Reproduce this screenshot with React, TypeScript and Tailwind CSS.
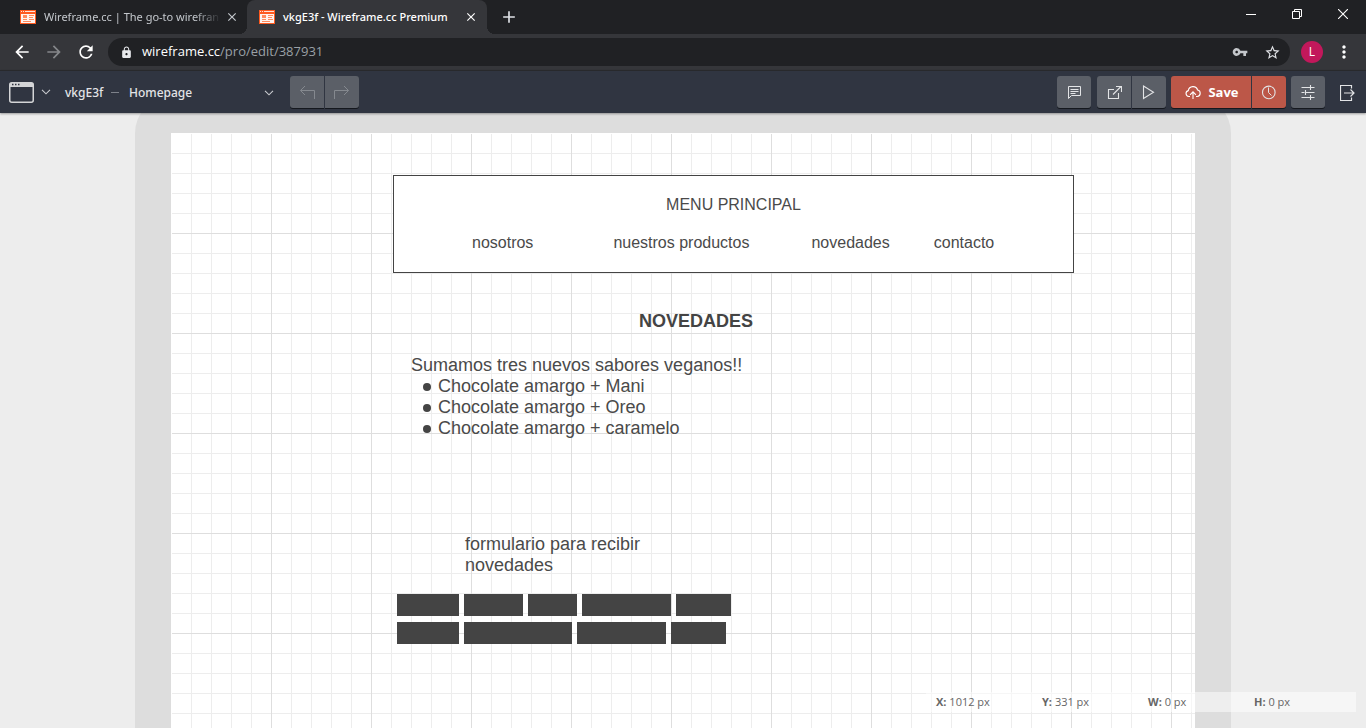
import React from "react";
import {
  MdAdd,
  MdArrowBack,
  MdArrowForward,
  MdClose,
  MdLock,
  MdMoreVert,
  MdRefresh,
  MdStarBorder,
  MdVpnKey,
} from "react-icons/md";

function Favicon() {
  return (
    <svg width="16" height="14" viewBox="0 0 16 14" className="shrink-0" shapeRendering="crispEdges">
      <rect width="16" height="14" fill="#ff5a1f" />
      <path d="M1 1H2V2H1ZM3 1H4V2H3ZM5 1H15V2H5Z" fill="#ffe3d8" />
      <rect x="1" y="4" width="14" height="9" fill="#fff3ee" />
      <path d="M3 5H7V8H3ZM9 5H14V6H9ZM9 7H13V8H9ZM3 9H7V10H3ZM9 9H14V10H9ZM3 11H11V12H3Z" fill="#ff8a5c" />
    </svg>
  );
}

function LineIcon({ children, className = "" }: { children: React.ReactNode; className?: string }) {
  return (
    <svg
      width="16"
      height="16"
      viewBox="0 0 16 16"
      fill="none"
      stroke="currentColor"
      strokeWidth="1"
      className={`shrink-0 ${className}`}
    >
      {children}
    </svg>
  );
}

function Chevron({ className = "" }: { className?: string }) {
  return (
    <svg width="10" height="6" viewBox="0 0 10 6" fill="none" stroke="#c9cbcf" strokeWidth="1.1" className={className}>
      <path d="M1 0.8 5 4.8 9 0.8" />
    </svg>
  );
}

function ToolButton({
  label,
  className,
  children,
}: {
  label: string;
  className: string;
  children: React.ReactNode;
}) {
  return (
    <button
      type="button"
      aria-label={label}
      className={`flex h-8 items-center justify-center shadow-[0_1px_0_#15181e] ${className}`}
    >
      {children}
    </button>
  );
}

function TabBar() {
  return (
    <div className="flex h-[34px] bg-[#202124] font-['Noto_Sans',sans-serif] text-[11px]">
      <div className="flex w-[247px] items-center pr-1 pl-5 text-[#c4c8cd]">
        <Favicon />
        <span className="ml-2 min-w-0 flex-1 whitespace-nowrap [mask-image:linear-gradient(to_right,black_85%,transparent)]">
          Wireframe.cc | The go-to wirefran
        </span>
        <button type="button" aria-label="Close tab" className="p-1">
          <MdClose size={14} />
        </button>
      </div>
      <div className="relative flex w-60 items-center rounded-t-lg bg-[#35363a] pr-[5px] pl-3 text-white">
        <span className="absolute bottom-0 -left-2 size-2 bg-[radial-gradient(circle_at_0_0,transparent_8px,#35363a_8px)]" />
        <span className="absolute -right-2 bottom-0 size-2 bg-[radial-gradient(circle_at_100%_0,transparent_8px,#35363a_8px)]" />
        <Favicon />
        <span className="ml-2 flex-1 font-medium whitespace-nowrap">vkgE3f - Wireframe.cc Premium</span>
        <button type="button" aria-label="Close tab" className="p-1">
          <MdClose size={14} />
        </button>
      </div>
      <button type="button" aria-label="New tab" className="ml-3 text-[#dee1e6]">
        <MdAdd size={20} />
      </button>
      <div className="ml-auto flex h-7 text-white">
        <button type="button" aria-label="Minimize" className="flex w-[46px] items-center justify-center">
          <svg width="10" height="10" viewBox="0 0 10 10" stroke="currentColor">
            <path d="M0 5.5H10" />
          </svg>
        </button>
        <button type="button" aria-label="Restore" className="flex w-[46px] items-center justify-center">
          <svg width="10" height="10" viewBox="0 0 10 10" fill="none" stroke="currentColor">
            <path d="M0.5 2.5H7.5V9.5H0.5ZM2.5 2.5V0.5H9.5V7.5H7.5" />
          </svg>
        </button>
        <button type="button" aria-label="Close window" className="flex w-[46px] items-center justify-center">
          <svg width="10" height="10" viewBox="0 0 10 10" stroke="currentColor" strokeWidth="1.1">
            <path d="M0 0 10 10M10 0 0 10" />
          </svg>
        </button>
      </div>
    </div>
  );
}

function AddressBar() {
  return (
    <div className="flex h-9 items-center bg-[#35363a] px-3 text-white">
      <button type="button" aria-label="Back">
        <MdArrowBack size={20} />
      </button>
      <button type="button" aria-label="Forward" className="ml-3 text-[#85878a]">
        <MdArrowForward size={20} />
      </button>
      <button type="button" aria-label="Reload" className="ml-3">
        <MdRefresh size={20} />
      </button>
      <div className="ml-3 flex h-7 flex-1 items-center rounded-full bg-[#202124] pr-[9px] pl-3">
        <MdLock size={13} className="text-[#e8eaed]" />
        <a href="#address" className="ml-[9px] flex-1 text-[13px] text-[#9aa0a6]">
          <span className="text-white">wireframe.cc</span>/pro/edit/387931
        </a>
        <button type="button" aria-label="Saved passwords" className="text-[#c4c7cb]">
          <MdVpnKey size={16} />
        </button>
        <button type="button" aria-label="Bookmark" className="ml-4 text-[#dfe1e5]">
          <MdStarBorder size={17} />
        </button>
      </div>
      <button
        type="button"
        aria-label="Profile"
        className="ml-[11px] flex size-[22px] items-center justify-center rounded-full bg-[#c2185b] text-xs"
      >
        L
      </button>
      <button type="button" aria-label="Browser menu" className="ml-[11px]">
        <MdMoreVert size={20} />
      </button>
    </div>
  );
}

function EditorToolbar() {
  return (
    <header className="relative z-10 flex h-[43px] items-center border-t border-[#28292c] bg-[#303541] pr-[11px] pl-[9px] text-[13px] text-[#e3e4e6] shadow-[0_1px_2px_rgba(0,0,0,0.35)]">
      <button type="button" aria-label="Device" className="flex items-center gap-[7px]">
        <svg width="25" height="21" viewBox="0 0 25 21" fill="none">
          <rect x="0.75" y="0.75" width="23.5" height="19.5" rx="2" stroke="#d4d5d7" strokeWidth="1.5" />
          <path d="M1 1H24V5H1Z" fill="#d4d5d7" />
          <path d="M3 2.5H4.5M6 2.5H7.5M9 2.5H10.5" stroke="#303541" strokeWidth="1.4" />
        </svg>
        <Chevron />
      </button>
      <div className="flex items-center pt-px font-['Noto_Sans',sans-serif] text-xs font-medium">
        <a href="#project" className="ml-[14px] w-[38px]">
          vkgE3f
        </a>
        <span className="ml-2 h-px w-2 bg-[#7d818a]" />
        <div className="relative ml-[10px] flex w-[146px] items-center">
          <select aria-label="Page" className="w-full appearance-none bg-transparent">
            <option>Homepage</option>
          </select>
          <Chevron className="pointer-events-none absolute right-px" />
        </div>
      </div>

      <div className="ml-[15px] flex gap-px text-[#85898f]">
        <ToolButton label="Undo" className="w-[34px] rounded-l-[3px] bg-[#5b5f67]">
          <LineIcon>
            <path d="M6 2 1.5 6.5 6 11M1.5 6.5H15.5V15" />
          </LineIcon>
        </ToolButton>
        <ToolButton label="Redo" className="w-[34px] rounded-r-[3px] bg-[#5b5f67]">
          <LineIcon>
            <path d="M10 2 14.5 6.5 10 11M14.5 6.5H0.5V15" />
          </LineIcon>
        </ToolButton>
      </div>

      <div className="ml-auto flex items-center">
        <ToolButton label="Comments" className="w-[34px] rounded-[3px] bg-[#5b5f67]">
          <LineIcon>
            <path d="M2.5 2.5H14.5V11.5H5.5L2.5 14.5ZM4.5 5.5H12.5M4.5 7.5H12.5M4.5 9.5H9.5" />
          </LineIcon>
        </ToolButton>
        <div className="ml-[6px] flex gap-px">
          <ToolButton label="Share" className="w-[34px] rounded-l-[3px] bg-[#5b5f67]">
            <LineIcon>
              <path d="M8 5.5H2.5V14.5H12.5V9M7 10.5 15 2.5M10 2.5H15.5V8" strokeWidth="1.1" />
            </LineIcon>
          </ToolButton>
          <ToolButton label="Preview" className="w-[34px] rounded-r-[3px] bg-[#5b5f67]">
            <LineIcon>
              <path d="M2.5 2 12.5 8.2 2.5 14.4Z" strokeWidth="1.1" />
            </LineIcon>
          </ToolButton>
        </div>
        <div className="ml-[5px] flex gap-px">
          <ToolButton
            label="Save"
            className="w-20 gap-[7px] rounded-l-[3px] bg-[#bc5748] pl-[2px] font-bold text-white"
          >
            <LineIcon>
              <path
                d="M5 12.5H3.8A3 3 0 0 1 3.3 6.6 4.8 4.8 0 0 1 12.6 6 3.3 3.3 0 0 1 12.3 12.5H11M8 15V8M5 10.8 8 7.8 11 10.8"
                strokeWidth="1.1"
              />
            </LineIcon>
            <span className="pt-px">Save</span>
          </ToolButton>
          <ToolButton label="History" className="w-[34px] rounded-r-[3px] bg-[#bc5748]">
            <LineIcon>
              <circle cx="7.8" cy="8.4" r="6.3" strokeWidth="1.1" />
              <path d="M7.5 3.5V8.5L10.5 11.5" />
            </LineIcon>
          </ToolButton>
        </div>
        <ToolButton label="Settings" className="ml-[5px] w-[34px] rounded-[3px] bg-[#5b5f67]">
          <LineIcon>
            <path
              d="M1.5 3.5H14.5M1.5 8.5H4.5M6 8.5H14.5M1.5 13.5H14.5M10.5 1V6M5.5 6V11M10.5 11V16"
              strokeWidth="1.1"
            />
          </LineIcon>
        </ToolButton>
        <button type="button" aria-label="Exit" className="ml-[15px] pt-[2px]">
          <svg width="15" height="16" viewBox="0 0 15 16" fill="none" stroke="currentColor">
            <path d="M11.5 3.5V0.5H0.5V15.5H11.5V12.5M4 8H14M10.5 4.5 14 8 10.5 11.5" strokeWidth="1.2" />
          </svg>
        </button>
      </div>
    </header>
  );
}

const news = ["Chocolate amargo + Mani", "Chocolate amargo + Oreo", "Chocolate amargo + caramelo"];

const redactedRows = [
  [62, 59, 49, 89, 55],
  [62, 108, 89, 55],
];

function Wireframe() {
  return (
    <div className="relative min-h-[768px] w-[1024px] bg-white pt-px pl-px font-['Liberation_Sans',Arial,sans-serif] text-[#4a4a4a]">
      <div className="h-[767px] bg-[linear-gradient(to_right,transparent_99px,#dedede_99px),linear-gradient(to_bottom,transparent_99px,#dedede_99px),linear-gradient(to_right,transparent_19px,#ededed_19px),linear-gradient(to_bottom,transparent_19px,#ededed_19px)] bg-[size:100px_100px,100px_100px,20px_20px,20px_20px]" />

      <nav className="absolute top-[42px] left-[222px] h-[98px] w-[681px] border border-[#444] bg-white pt-[19px] text-base leading-5">
        <p className="text-center">MENU PRINCIPAL</p>
        <div className="mt-[18px] flex pl-[78px]">
          <a href="#nosotros">nosotros</a>
          <a href="#productos" className="ml-20">
            nuestros productos
          </a>
          <a href="#novedades" className="ml-[62px]">
            novedades
          </a>
          <a href="#contacto" className="ml-11">
            contacto
          </a>
        </div>
      </nav>

      <h1 className="absolute top-[178px] left-[468px] text-lg leading-[21px] font-bold text-[#444]">NOVEDADES</h1>

      <div className="absolute top-[222px] left-[240px] text-lg leading-[21px] whitespace-nowrap">
        <p>Sumamos tres nuevos sabores veganos!!</p>
        <ul className="pl-3">
          {news.map((item) => (
            <li key={item} className="flex items-center gap-[7px]">
              <span className="mt-px size-2 rounded-full bg-[#444]" />
              {item}
            </li>
          ))}
        </ul>
      </div>

      <p className="absolute top-[401px] left-[294px] w-[200px] text-lg leading-[21px]">
        formulario para recibir novedades
      </p>

      <div className="absolute top-[461px] left-[226px] flex flex-col gap-[6px]">
        {redactedRows.map((row, r) => (
          <div key={r} className="flex gap-[5px]">
            {row.map((width, i) => (
              <span key={i} className="h-[22px] bg-[#444]" style={{ width }} />
            ))}
          </div>
        ))}
      </div>
    </div>
  );
}

function StatusBar() {
  const items = [
    ["X:", "1012 px"],
    ["Y:", "331 px"],
    ["W:", "0 px"],
    ["H:", "0 px"],
  ];
  return (
    <div className="absolute right-[10px] bottom-4 flex h-5 w-[430px] items-center bg-white/50 pl-[10px] text-[11px] text-[#666]">
      {items.map(([name, value]) => (
        <span key={name} className="w-[106px] shrink-0 last:w-auto">
          <b>{name}</b> {value}
        </span>
      ))}
    </div>
  );
}

export default function App() {
  return (
    <div className="flex h-screen flex-col overflow-hidden font-['Open_Sans','Noto_Sans',sans-serif]">
      <TabBar />
      <AddressBar />
      <EditorToolbar />
      <main className="relative min-h-0 flex-1 overflow-hidden bg-[#ededed]">
        <div className="mx-auto -mt-4 w-fit rounded-[36px] bg-[#ddd] p-9">
          <Wireframe />
        </div>
        <StatusBar />
      </main>
    </div>
  );
}
